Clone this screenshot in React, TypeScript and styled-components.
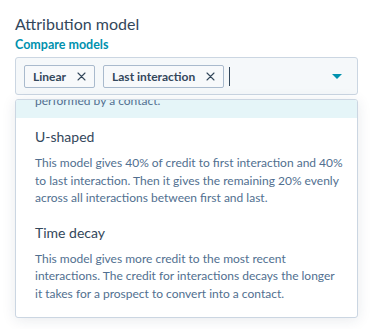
import React from "react";
import styled, { createGlobalStyle } from "styled-components";

const Global = createGlobalStyle`
  html, body { margin: 0; padding: 0; background: #ffffff; }
  body { font-family: Lato, "Open Sans", sans-serif; -webkit-font-smoothing: antialiased; }
`;

const Page = styled.div`
  width: 373px;
  height: 329px;
  box-sizing: border-box;
  padding: 12px 15px 0 15px;
  overflow: hidden;
`;

const Label = styled.div`
  font-size: 16px;
  line-height: 24px;
  color: #33475b;
`;

const Link = styled.a`
  display: block;
  font-size: 12.5px;
  font-weight: 700;
  line-height: 18px;
  color: #0091ae;
  text-decoration: none;
`;

const Field = styled.div`
  margin-top: 3px;
  height: 38px;
  box-sizing: border-box;
  border: 1px solid #cbd6e2;
  border-radius: 3px;
  background: #f5f8fa;
  display: flex;
  align-items: center;
  padding: 0 15px 0 8px;
  gap: 8px;
`;

const Tag = styled.span`
  display: inline-flex;
  align-items: center;
  height: 23px;
  box-sizing: border-box;
  border: 1px solid #a9bacd;
  border-radius: 2px;
  background: #f7f9fb;
  padding: 0 8px;
  gap: 11px;
  font-size: 12px;
  font-weight: 700;
  color: #33475b;
`;

const Cursor = styled.span`
  width: 1px;
  height: 19px;
  background: #33475b;
  margin-left: -3px;
`;

const Spacer = styled.span`
  flex: 1;
`;

const Panel = styled.div`
  margin-top: 4px;
  height: 219px;
  box-sizing: border-box;
  border: 1px solid #cbd6e2;
  border-radius: 3px;
  background: #ffffff;
  box-shadow: 0 2px 14px rgba(30, 50, 80, 0.1);
  overflow: hidden;
`;

const Item = styled.div<{ $active?: boolean; $clipped?: boolean }>`
  padding: ${(p) => (p.$clipped ? "0 14px 0 19px" : "7px 14px 7px 19px")};
  background: ${(p) => (p.$active ? "#e5f5f8" : "transparent")};
  height: ${(p) => (p.$clipped ? "18px" : "auto")};
  overflow: hidden;
`;

const ItemTitle = styled.div`
  font-size: 14px;
  line-height: 24px;
  color: #33475b;
`;

const ItemDesc = styled.div<{ $shift?: number }>`
  margin-top: ${(p) => (p.$shift !== undefined ? `${p.$shift}px` : "5px")};
  font-size: 12px;
  line-height: 17.5px;
  color: #516f90;
`;

const Close = () => (
  <svg width="9" height="9" viewBox="0 0 9 9" aria-hidden>
    <path d="M1 1 L8 8 M8 1 L1 8" stroke="#33475b" strokeWidth="1.1" strokeLinecap="round" />
  </svg>
);

const Caret = () => (
  <svg width="10" height="5" viewBox="0 0 10 5" aria-hidden>
    <path d="M0 0 H10 L5 5 Z" fill="#0091ae" />
  </svg>
);

export default function App() {
  return (
    <>
      <Global />
      <Page>
        <Label>Attribution model</Label>
        <Link href="#">Compare models</Link>
        <Field>
          <Tag>
            Linear <Close />
          </Tag>
          <Tag>
            Last interaction <Close />
          </Tag>
          <Cursor />
          <Spacer />
          <Caret />
        </Field>
        <Panel>
          <Item $active $clipped>
            <ItemDesc $shift={-8}>performed by a contact.</ItemDesc>
          </Item>
          <Item>
            <ItemTitle>U-shaped</ItemTitle>
            <ItemDesc>
              This model gives 40% of credit to first interaction and 40% to last interaction. Then it
              gives the remaining 20% evenly across all interactions between first and last.
            </ItemDesc>
          </Item>
          <Item>
            <ItemTitle>Time decay</ItemTitle>
            <ItemDesc>
              This model gives more credit to the most recent interactions. The credit for
              interactions decays the longer it takes for a prospect to convert into a contact.
            </ItemDesc>
          </Item>
        </Panel>
      </Page>
    </>
  );
}
